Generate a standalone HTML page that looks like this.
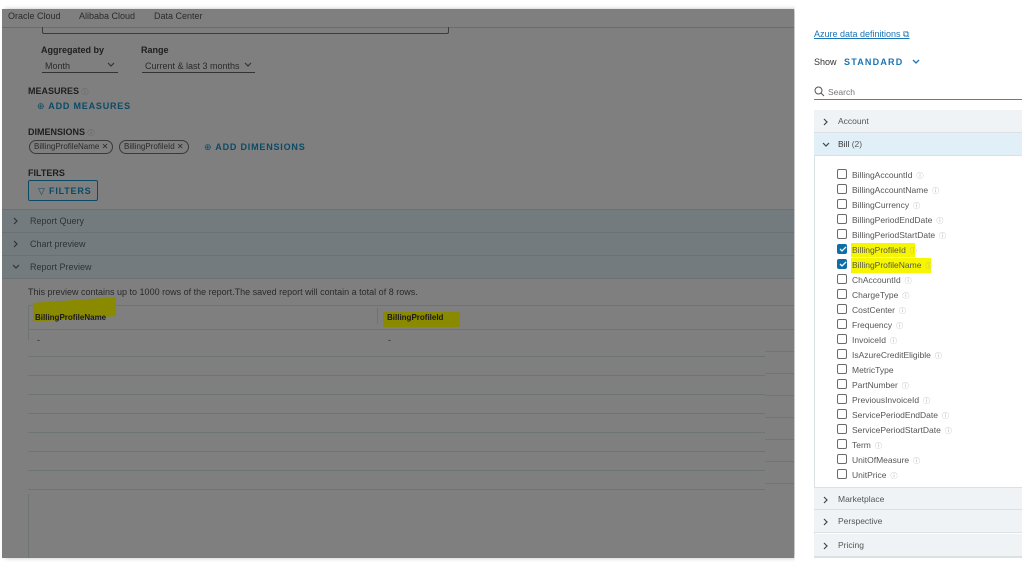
<!DOCTYPE html>
<html><head><meta charset="utf-8"><style>
*{box-sizing:border-box;margin:0;padding:0}
body{width:1022px;height:566px;background:#fff;font-family:"Liberation Sans",sans-serif;position:relative;overflow:hidden}
.a{position:absolute;white-space:nowrap}
#left{position:absolute;left:2px;top:9px;width:792px;height:549px;background:#7f7f7f;overflow:hidden;box-shadow:3px 0 4px rgba(0,0,0,.25)}
.t{font-size:9px;color:#2a2a2a}
.b{font-size:9px;color:#1e1e1e;font-weight:bold}
.lk{font-size:9px;color:#0b4a66;font-weight:bold;letter-spacing:.8px}
.hdr{position:absolute;left:0;width:792px;height:23px;background:#737b7f;border-bottom:1px solid #6a7073}
.hdr .l{position:absolute;left:28px;top:6px;font-size:9px;color:#2d3336}
.hdr svg{position:absolute;left:11px;top:7px}
.row{position:absolute;left:26px;width:737px;height:1px;background:#6e7373}
.sl{position:absolute;left:763px;width:30px;height:1px;background:#707575}
.chip{position:absolute;top:131px;height:14px;border:1px solid #3a3a3a;border-radius:8px;font-size:8px;color:#2a2a2a;padding:1px 4px;line-height:10px}
#right{position:absolute;left:795px;top:0;width:227px;height:566px;background:#fff}
.it{position:absolute;left:57px;font-size:8.5px;color:#565656;height:12px;line-height:11px;white-space:nowrap}
.cb{position:absolute;left:-15px;top:-1px;width:10px;height:10px;border:1px solid #6a6a6a;border-radius:2px;background:#fff}
.cb.on{background:#0e6fa8;border-color:#0e6fa8}
.i{color:#aaa;font-size:7px;margin-left:4px}
.acc{position:absolute;left:19px;width:208px;height:23px;background:#f0f3f5;border-bottom:1px solid #dbe0e3;font-size:8.5px;color:#555}
.acc svg{position:absolute;left:9px;top:8px}
.acc .l{position:absolute;left:24px;top:6px}
</style></head><body>
<div id="left">
  <div class="a" style="left:6px;top:2px;font-size:9px;color:#2b2b2b">Oracle Cloud</div>
  <div class="a" style="left:77px;top:2px;font-size:9px;color:#2b2b2b">Alibaba Cloud</div>
  <div class="a" style="left:152px;top:2px;font-size:9px;color:#2b2b2b">Data Center</div>
  <div class="a" style="left:0;top:18px;width:792px;height:1px;background:#6b6b6b"></div>
  <div class="a" style="left:40px;top:18px;width:407px;height:7px;border:1px solid #3c3c3c;border-top:none;border-radius:0 0 2px 2px"></div>
  <div class="a b" style="left:39px;top:36px">Aggregated by</div>
  <div class="a b" style="left:139px;top:36px">Range</div>
  <div class="a t" style="left:43px;top:52px">Month</div>
  <svg class="a" style="left:105px;top:53px" width="8" height="6"><path d="M1 1L4 4L7 1" stroke="#333" fill="none" stroke-width="1.2"/></svg>
  <div class="a" style="left:40px;top:63px;width:76px;height:1px;background:#333"></div>
  <div class="a t" style="left:143px;top:52px">Current &amp; last 3 months</div>
  <svg class="a" style="left:242px;top:53px" width="8" height="6"><path d="M1 1L4 4L7 1" stroke="#333" fill="none" stroke-width="1.2"/></svg>
  <div class="a" style="left:140px;top:63px;width:113px;height:1px;background:#333"></div>
  <div class="a b" style="left:26px;top:77px">MEASURES <span style="font-weight:normal;color:#555;font-size:7px">ⓘ</span></div>
  <div class="a lk" style="left:35px;top:92px"><span style="font-weight:normal">⊕</span> ADD MEASURES</div>
  <div class="a b" style="left:26px;top:118px">DIMENSIONS <span style="font-weight:normal;color:#555;font-size:7px">ⓘ</span></div>
  <div class="chip" style="left:27px">BillingProfileName ✕</div>
  <div class="chip" style="left:117px">BillingProfileId ✕</div>
  <div class="a lk" style="left:202px;top:133px"><span style="font-weight:normal">⊕</span> ADD DIMENSIONS</div>
  <div class="a b" style="left:26px;top:159px">FILTERS</div>
  <div class="a lk" style="left:26px;top:171px;width:70px;height:21px;border:1px solid #0b4a66;border-radius:2px;padding:5px 0 0 9px"><span style="font-weight:normal">▽</span> FILTERS</div>
  <div class="a" style="left:0;top:200px;width:792px;height:1px;background:#6e6e6e"></div>
  <div class="hdr" style="top:201px"><svg width="6" height="8"><path d="M1 1L4 4L1 7" stroke="#2d3336" fill="none" stroke-width="1.2"/></svg><span class="l">Report Query</span></div>
  <div class="hdr" style="top:224px"><svg width="6" height="8"><path d="M1 1L4 4L1 7" stroke="#2d3336" fill="none" stroke-width="1.2"/></svg><span class="l">Chart preview</span></div>
  <div class="hdr" style="top:247px"><svg width="8" height="6" style="left:10px;top:8px"><path d="M1 1L4 4L7 1" stroke="#2d3336" fill="none" stroke-width="1.2"/></svg><span class="l">Report Preview</span></div>
  <div class="a t" style="left:26px;top:278px">This preview contains up to 1000 rows of the report.The saved report will contain a total of 8 rows.</div>
  <div class="a" style="left:26px;top:296px;width:767px;height:1px;background:#6e7373"></div>
  <div class="a" style="left:26px;top:296px;width:1px;height:35px;background:#6e7373"></div>
  <div class="a" style="left:31px;top:291px;width:83px;height:19px;background:#8a8a00;transform:skewY(-4deg)"></div>
  <div class="a" style="left:381px;top:303px;width:77px;height:15px;background:#8a8a00"></div>
  <div class="a" style="left:33px;top:304px;font-size:8px;font-weight:bold;color:#1a1a1a">BillingProfileName</div>
  <div class="a" style="left:375px;top:299px;width:1px;height:16px;background:#6e7373"></div>
  <div class="a" style="left:385px;top:304px;font-size:8px;font-weight:bold;color:#1a1a1a">BillingProfileId</div>
  <div class="a" style="left:26px;top:320px;width:767px;height:1px;background:#6e7373"></div>
  <div class="a t" style="left:35px;top:326px">-</div>
  <div class="a t" style="left:386px;top:326px">-</div>
  <div class="row" style="top:347px"></div><div class="row" style="top:366px"></div>
  <div class="row" style="top:385px"></div><div class="row" style="top:404px"></div>
  <div class="row" style="top:423px"></div><div class="row" style="top:442px"></div>
  <div class="row" style="top:461px"></div><div class="row" style="top:480px"></div>
  <div class="sl" style="top:342px"></div><div class="sl" style="top:364px"></div>
  <div class="sl" style="top:386px"></div><div class="sl" style="top:408px"></div>
  <div class="sl" style="top:430px"></div><div class="sl" style="top:452px"></div>
  <div class="sl" style="top:474px"></div>
  <div class="a" style="left:26px;top:485px;width:1px;height:70px;background:#6e7373"></div>
</div>
<div id="right">
  <div class="a" style="left:19px;top:29px;font-size:9px;color:#1a74b5;text-decoration:underline">Azure data definitions ⧉</div>
  <div class="a" style="left:19px;top:57px;font-size:9px;color:#333">Show</div>
  <div class="a" style="left:49px;top:57px;font-size:9px;color:#1a74b5;font-weight:bold;letter-spacing:1.2px">STANDARD</div>
  <svg class="a" style="left:117px;top:59px" width="8" height="6"><path d="M1 1L4 4L7 1" stroke="#1a74b5" fill="none" stroke-width="1.3"/></svg>
  <svg class="a" style="left:19px;top:86px" width="11" height="11"><circle cx="4.5" cy="4.5" r="3.5" stroke="#555" fill="none"/><path d="M7 7L10 10" stroke="#555"/></svg>
  <div class="a" style="left:33px;top:87px;font-size:8.5px;color:#777">Search</div>
  <div class="a" style="left:19px;top:99px;width:208px;height:1px;background:#777"></div>
  <div class="a" style="left:19px;top:110px;width:208px;height:448px;border:1px solid #dbe0e3;border-right:none"></div>
  <div class="acc" style="top:110px"><svg width="6" height="8"><path d="M1 1L4 4L1 7" stroke="#444" fill="none" stroke-width="1.2"/></svg><span class="l">Account</span></div>
  <div class="acc" style="top:133px;background:#e1f0f8"><svg width="8" height="6" style="left:8px;top:9px"><path d="M1 1L4 4L7 1" stroke="#444" fill="none" stroke-width="1.2"/></svg><span class="l" style="color:#333">Bill <span style="color:#555">(2)</span></span></div>
  <div class="a" style="left:56px;top:243px;width:64px;height:14px;background:#f6f600"></div>
  <div class="a" style="left:56px;top:258px;width:80px;height:15px;background:#f6f600"></div>
  <div class="it" style="top:170px"><span class="cb"></span>BillingAccountId<span class="i">ⓘ</span></div>
  <div class="it" style="top:185px"><span class="cb"></span>BillingAccountName<span class="i">ⓘ</span></div>
  <div class="it" style="top:200px"><span class="cb"></span>BillingCurrency<span class="i">ⓘ</span></div>
  <div class="it" style="top:215px"><span class="cb"></span>BillingPeriodEndDate<span class="i">ⓘ</span></div>
  <div class="it" style="top:230px"><span class="cb"></span>BillingPeriodStartDate<span class="i">ⓘ</span></div>
  <div class="it" style="top:245px"><span class="cb on"></span>BillingProfileId<span class="i">ⓘ</span></div>
  <div class="it" style="top:260px"><span class="cb on"></span>BillingProfileName<span class="i">ⓘ</span></div>
  <div class="it" style="top:275px"><span class="cb"></span>ChAccountId<span class="i">ⓘ</span></div>
  <div class="it" style="top:290px"><span class="cb"></span>ChargeType<span class="i">ⓘ</span></div>
  <div class="it" style="top:305px"><span class="cb"></span>CostCenter<span class="i">ⓘ</span></div>
  <div class="it" style="top:320px"><span class="cb"></span>Frequency<span class="i">ⓘ</span></div>
  <div class="it" style="top:335px"><span class="cb"></span>InvoiceId<span class="i">ⓘ</span></div>
  <div class="it" style="top:350px"><span class="cb"></span>IsAzureCreditEligible<span class="i">ⓘ</span></div>
  <div class="it" style="top:365px"><span class="cb"></span>MetricType</div>
  <div class="it" style="top:380px"><span class="cb"></span>PartNumber<span class="i">ⓘ</span></div>
  <div class="it" style="top:395px"><span class="cb"></span>PreviousInvoiceId<span class="i">ⓘ</span></div>
  <div class="it" style="top:410px"><span class="cb"></span>ServicePeriodEndDate<span class="i">ⓘ</span></div>
  <div class="it" style="top:425px"><span class="cb"></span>ServicePeriodStartDate<span class="i">ⓘ</span></div>
  <div class="it" style="top:440px"><span class="cb"></span>Term<span class="i">ⓘ</span></div>
  <div class="it" style="top:455px"><span class="cb"></span>UnitOfMeasure<span class="i">ⓘ</span></div>
  <div class="it" style="top:470px"><span class="cb"></span>UnitPrice<span class="i">ⓘ</span></div>
  <div class="acc" style="top:487px;border-top:1px solid #dbe0e3"><svg width="6" height="8"><path d="M1 1L4 4L1 7" stroke="#444" fill="none" stroke-width="1.2"/></svg><span class="l">Marketplace</span></div>
  <div class="acc" style="top:510px"><svg width="6" height="8"><path d="M1 1L4 4L1 7" stroke="#444" fill="none" stroke-width="1.2"/></svg><span class="l">Perspective</span></div>
  <div class="acc" style="top:534px"><svg width="6" height="8"><path d="M1 1L4 4L1 7" stroke="#444" fill="none" stroke-width="1.2"/></svg><span class="l">Pricing</span></div>
  <svg class="a" style="left:44px;top:245px;z-index:2" width="8" height="8"><path d="M1 4L3 6L7 2" stroke="#fff" fill="none" stroke-width="1.3"/></svg>
  <svg class="a" style="left:44px;top:260px;z-index:2" width="8" height="8"><path d="M1 4L3 6L7 2" stroke="#fff" fill="none" stroke-width="1.3"/></svg>
</div>
</body></html>
